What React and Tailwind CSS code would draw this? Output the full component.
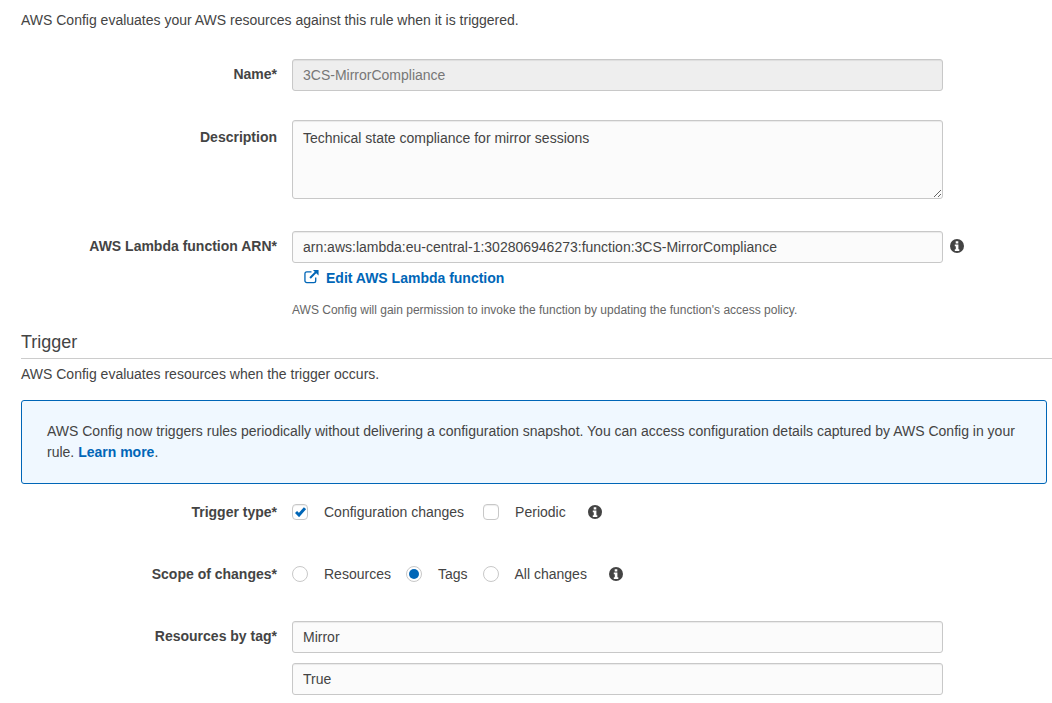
import React from 'react';

const Label = ({ children, className = '' }) => (
  <div className={`w-[256px] shrink-0 text-right font-bold ${className}`}>{children}</div>
);

// font-awesome 4 style info circle, the newer one in react-icons has a different "i"
const Info = ({ className = '' }) => (
  <svg viewBox="0 0 14 14" className={`w-[14px] h-[14px] shrink-0 text-[#444] ${className}`}>
    <circle cx="7" cy="7" r="7" fill="currentColor" />
    <path fill="#fff" d="M5.7 2.2h2.6v2.2H5.7zM4.8 5.6h3.6v4.6h.9v1.7H4.8v-1.7h1V7.2h-1z" />
  </svg>
);

const TextInput = ({ value, disabled }) => (
  <input
    readOnly
    value={value}
    className={`block w-[651px] h-[32px] px-[10px] rounded-[3px] border border-[#c8c8c8] shadow-[inset_0_1px_1px_rgba(0,0,0,0.07)] outline-none ${
      disabled ? 'bg-[#eeeeee] text-[#777]' : 'bg-[#fbfbfb] text-[#444]'
    }`}
  />
);

const Checkbox = ({ checked }) => (
  <span className="w-4 h-4 shrink-0 rounded-[4px] border border-[#c8c8c8] bg-white shadow-[inset_0_1px_1px_rgba(0,0,0,0.07)] flex items-center justify-center">
    {checked && (
      <svg viewBox="0 0 11 10" className="w-[11px] h-[10px] text-[#0066b7]" fill="none" stroke="currentColor" strokeWidth="3">
        <path d="M1 5 4 8 10 1.2" />
      </svg>
    )}
  </span>
);

const Radio = ({ checked }) => (
  <span className="w-4 h-4 shrink-0 rounded-full border border-[#c8c8c8] bg-white flex items-center justify-center">
    {checked && <span className="w-[10px] h-[10px] rounded-full bg-[#0066b7]" />}
  </span>
);

export default function App() {
  return (
    <div className="h-[703px] overflow-hidden bg-white pl-[21px] text-[14px] leading-[20px] text-[#444] font-['Liberation_Sans',Arial,sans-serif]">
      <p className="pt-[10px]">AWS Config evaluates your AWS resources against this rule when it is triggered.</p>

      {/* Rule details */}
      <div className="flex gap-[15px] mt-[29px]">
        <Label className="pt-[5px]">Name*</Label>
        <TextInput value="3CS-MirrorCompliance" disabled />
      </div>

      <div className="flex gap-[15px] mt-[29px]">
        <Label className="pt-[7px]">Description</Label>
        <textarea
          readOnly
          value="Technical state compliance for mirror sessions"
          className="block w-[651px] h-[79px] px-[10px] py-[7px] rounded-[3px] border border-[#c8c8c8] bg-[#fbfbfb] text-[#444] shadow-[inset_0_1px_1px_rgba(0,0,0,0.07)] outline-none"
        />
      </div>

      <div className="flex gap-[15px] mt-[32px]">
        <Label className="pt-[5px]">AWS Lambda function ARN*</Label>
        <div>
          <div className="flex items-center">
            <TextInput value="arn:aws:lambda:eu-central-1:302806946273:function:3CS-MirrorCompliance" />
            <Info className="ml-[7px] -mt-[2px]" />
          </div>
          <a className="flex items-center gap-[7px] ml-[12px] mt-[5px] font-bold text-[#0066b7]">
            <svg viewBox="0 0 16 16" className="w-[15px] h-[15px] -mt-[4px]" fill="none" stroke="currentColor" strokeWidth="1.4">
              <path d="M12.5 9v3.5a2 2 0 0 1-2 2H3a2 2 0 0 1-2-2V5a2 2 0 0 1 2-2h5" />
              <path d="M6.5 9.5 14 2" strokeWidth="2.2" />
              <path d="M9.5 1h6v6z" fill="currentColor" stroke="none" />
            </svg>
            Edit AWS Lambda function
          </a>
          <p className="mt-[14px] text-[12px] leading-[16px] text-[#666]">
            AWS Config will gain permission to invoke the function by updating the function's access policy.
          </p>
        </div>
      </div>

      {/* Trigger */}
      <h3 className="mt-[12px] pb-[4px] border-b border-[#cccccc] text-[18px] leading-[24px]">Trigger</h3>
      <p className="mt-[5px]">AWS Config evaluates resources when the trigger occurs.</p>

      <div className="mt-[16px] mr-[5px] h-[84px] px-[25px] py-[20px] rounded-[3px] border border-[#0066b7] bg-[#f0f8ff] leading-[21px]">
        AWS Config now triggers rules periodically without delivering a configuration snapshot. You can access configuration details captured by AWS Config in your rule.{' '}
        <a className="font-bold text-[#0066b7]">Learn more</a>.
      </div>

      <div className="flex gap-[15px] items-center mt-[18px]">
        <Label>Trigger type*</Label>
        <div className="flex items-center">
          <Checkbox checked />
          <span className="ml-4">Configuration changes</span>
          <span className="ml-[19px]"><Checkbox /></span>
          <span className="ml-4">Periodic</span>
          <Info className="ml-[22px] -mt-px" />
        </div>
      </div>

      <div className="flex gap-[15px] items-center mt-[42px]">
        <Label>Scope of changes*</Label>
        <div className="flex items-center">
          <Radio />
          <span className="ml-4">Resources</span>
          <span className="ml-[15px]"><Radio checked /></span>
          <span className="ml-4">Tags</span>
          <span className="ml-[15px]"><Radio /></span>
          <span className="ml-4">All changes</span>
          <Info className="ml-[22px]" />
        </div>
      </div>

      <div className="flex gap-[15px] mt-[37px]">
        <Label className="pt-[5px]">Resources by tag*</Label>
        <div className="flex flex-col gap-[10px]">
          <TextInput value="Mirror" />
          <TextInput value="True" />
        </div>
      </div>
    </div>
  );
}
